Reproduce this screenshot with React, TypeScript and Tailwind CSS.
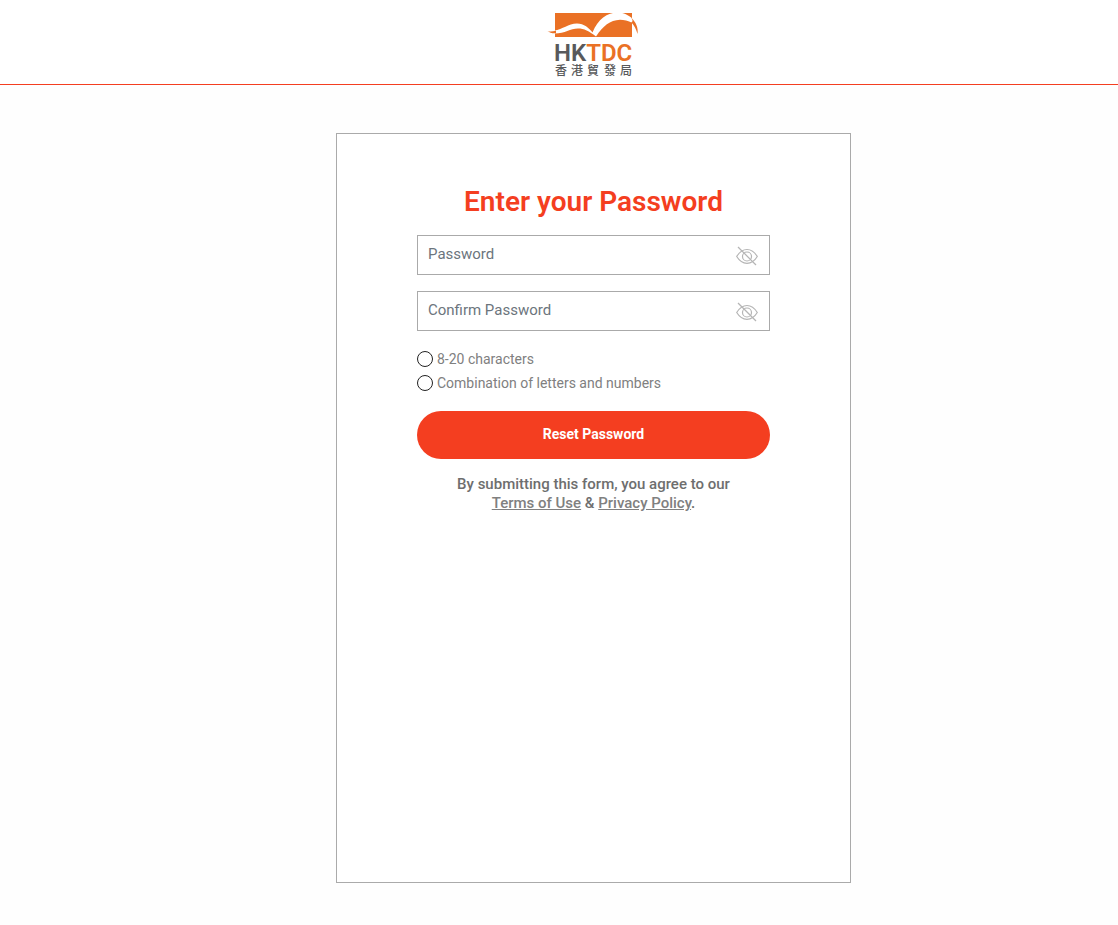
import React, { useState } from 'react';

const Logo: React.FC = () => (
  <svg width="92" height="68" viewBox="0 0 92 68" role="img" aria-label="HKTDC">
    <rect x="8" y="2" width="77" height="24" fill="#ea7125" />
    <path
      d="M7 19.500 C16 18.500 21 12.500 30 12.500 C37 12.500 42 17 45.500 21.500 C51 8 60 1.500 71 1.500 C77 1.500 81 4 86 8 L85.500 12 C81 9.500 77 8.700 73 8.700 C63 9 56 15 49 25.500 C42 20 37 17.500 31 17.500 C23 17.500 18 22.700 7 22.500 Z"
      fill="#fff"
    />
    <path d="M.5 20 C3 21 6 20.500 9 19.500 L9 22.300 C5 22.500 3 22 .5 20 Z M84 6.500 C89 11 91.500 17 90.500 23 C89 18 87.500 14.500 84 11 C86 11 86 9 84 6.500 Z" fill="#ea7125" />
    <text x="7" y="50" fontFamily="Roboto, sans-serif" fontSize="24" fontWeight="600" fill="#58595b">
      HK<tspan fill="#ea7125">TDC</tspan>
    </text>
    <g fontFamily="'Noto Sans CJK TC', sans-serif" fontSize="12" fontWeight="500" fill="#58595b">
      <text x="8" y="64">香</text>
      <text x="24" y="64">港</text>
      <text x="40" y="64">貿</text>
      <text x="57" y="64">發</text>
      <text x="73" y="64">局</text>
    </g>
  </svg>
);

const EyeOff: React.FC = () => (
  <svg width="22" height="20" viewBox="0 0 22 20" fill="none" stroke="#b5b5b5" strokeWidth="1.2" aria-hidden="true">
    <path d="M.7 10.500 C3.500 6 7 3.500 11 3.500 S18.500 6 21.300 10.500 C18.500 15 15 17.300 11 17.300 S3.500 15 .7 10.500 Z" />
    <circle cx="11" cy="10.500" r="4.500" />
    <path d="M2 1 L20 19" />
  </svg>
);

const PasswordField: React.FC<{ label: string }> = ({ label }) => {
  const [visible, setVisible] = useState(false);
  return (
    <div className="flex h-10 items-center border border-[#aaa] bg-white">
      <input
        type={visible ? 'text' : 'password'}
        aria-label={label}
        placeholder={label}
        className="h-full min-w-0 flex-1 px-2.5 pb-0.5 text-[15px] text-[#333] outline-none placeholder:text-[#6c757d]"
      />
      <button type="button" aria-label={`Show ${label}`} className="mr-[11px] pt-0.5" onClick={() => setVisible(!visible)}>
        <EyeOff />
      </button>
    </div>
  );
};

const rules = ['8-20 characters', 'Combination of letters and numbers'];

const App: React.FC = () => {
  return (
    <div className="min-h-screen bg-[#fefefe] font-['Roboto',sans-serif] text-[#6e6e6e]">
      <header className="flex justify-center border-b border-[#f43e20] bg-white pt-[11px] pb-[5px] pl-[67px]">
        <Logo />
      </header>
      <main className="flex justify-center py-12 pl-[69px]">
        <form className="min-h-[750px] w-full max-w-[515px] border border-[#aaa] bg-white px-20 pt-12" onSubmit={(e) => e.preventDefault()}>
          <h1 className="text-center text-[28px] leading-10 font-semibold text-[#f43e20]">Enter your Password</h1>
          <div className="mt-[13px] space-y-4">
            <PasswordField label="Password" />
            <PasswordField label="Confirm Password" />
          </div>
          <ul className="mt-4 text-sm leading-6 text-[#808080]">
            {rules.map((rule) => (
              <li key={rule} className="flex items-center gap-1">
                <span className="size-4 rounded-full border border-[#222]" />
                {rule}
              </li>
            ))}
          </ul>
          <button type="submit" className="mt-4 h-12 w-full rounded-full bg-[#f43e20] pb-0.5 text-sm font-bold text-white">
            Reset Password
          </button>
          <p className="mt-4 text-center text-[15px] leading-[19px] font-medium">
            By submitting this form, you agree to our
            <br />
            <a href="#terms" className="text-[#808080] underline">Terms of Use</a> &amp;{' '}
            <a href="#privacy" className="text-[#808080] underline">Privacy Policy</a>.
          </p>
        </form>
      </main>
    </div>
  );
};

export default App;
